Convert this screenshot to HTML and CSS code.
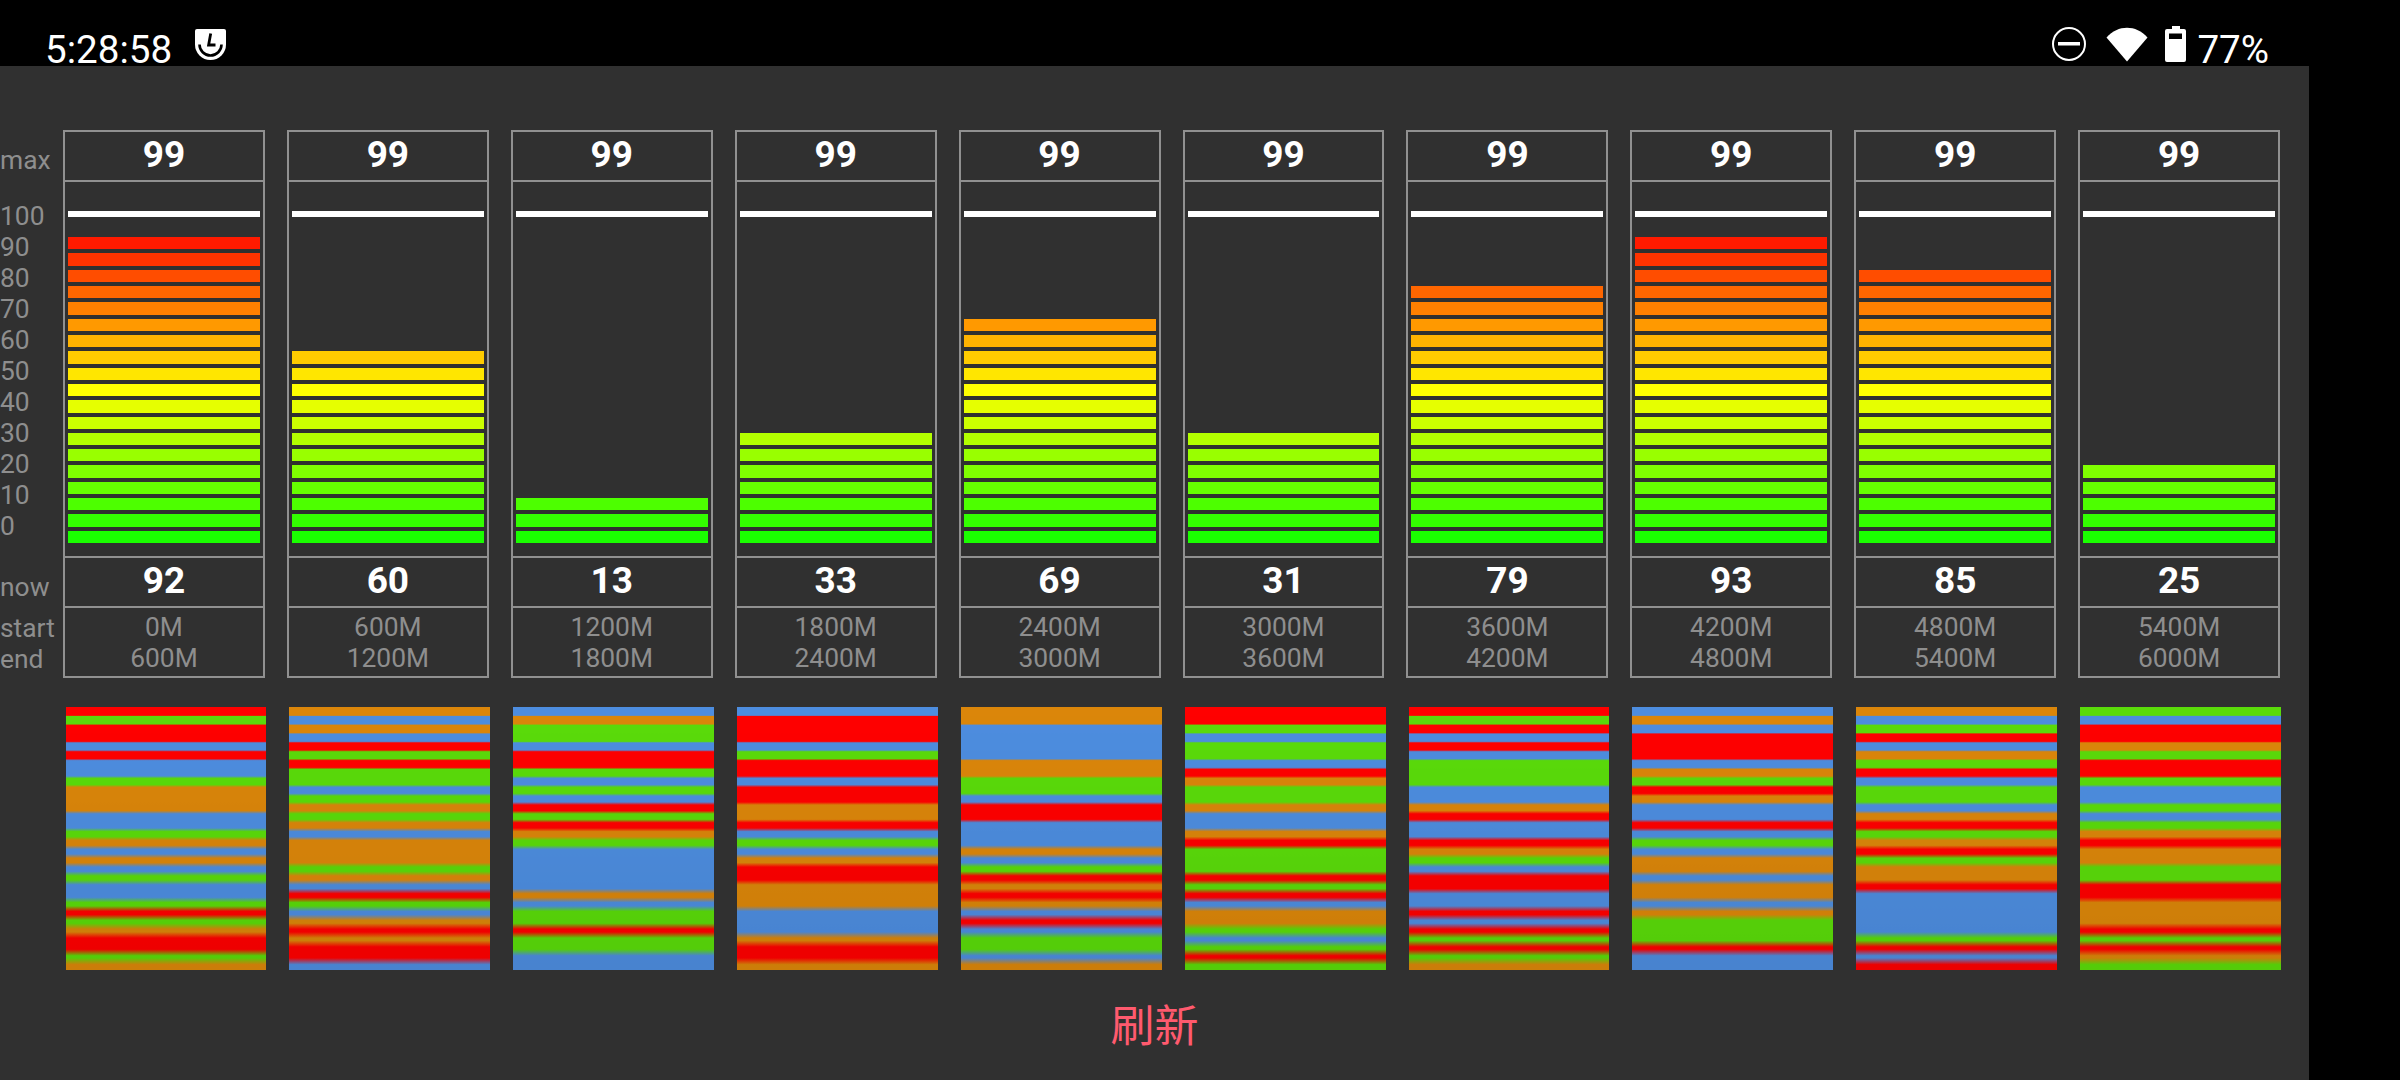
FILE: index.html
```html
<!DOCTYPE html>
<html lang="en">
<head>
  <meta charset="UTF-8">
  <meta name="viewport" content="width=device-width, initial-scale=1.0">
  <title>Flash Speed Test</title>
  <link rel="stylesheet" href="styles.css">
</head>
<body>
  <div class="screen">
    <div class="status">
      <div class="status-left">
        <span class="status-text">5:28:58</span>
        <svg class="icon-shield" width="31" height="31" viewBox="0 0 31 31">
          <path d="M2 0H29a2 2 0 0 1 2 2V15.500a15.500 15.500 0 0 1-31 0V2a2 2 0 0 1 2-2z" fill="#fff"/>
          <path d="M4.500 15.500a11 11 0 0 0 22 0" fill="none" stroke="#000" stroke-width="2.600"/>
          <path d="M15.700 4.500L13.600 16H20.500" fill="none" stroke="#000" stroke-width="2.800"/>
        </svg>
      </div>
      <div class="status-right">
        <svg class="icon-dnd" width="36" height="36" viewBox="0 0 36 36">
          <circle cx="18" cy="18" r="16" fill="none" stroke="#fff" stroke-width="2"/>
          <rect x="7" y="16" width="22" height="3.500" fill="#fff"/>
        </svg>
        <svg class="icon-wifi" width="42" height="35" viewBox="0 0 42 35">
          <path d="M0.500 10.500C12 -2.500 30 -2.500 41.500 10.500L21 34.500z" fill="#fff"/>
        </svg>
        <svg class="icon-battery" width="21" height="36" viewBox="0 0 21 36">
          <path fill-rule="evenodd" d="M7 0H15V3H19a2 2 0 0 1 2 2V34a2 2 0 0 1-2 2H2a2 2 0 0 1-2-2V5a2 2 0 0 1 2-2H7zM4 7.500V13H17V7.500z" fill="#fff"/>
        </svg>
        <span class="status-text">77%</span>
      </div>
    </div>

    <div class="panel">
      <div class="table-row">
        <div class="labels">
          <div class="label-max">max</div>
          <div class="label-scale">
            <div>100</div><div>90</div><div>80</div><div>70</div><div>60</div><div>50</div>
            <div>40</div><div>30</div><div>20</div><div>10</div><div>0</div>
          </div>
          <div class="label-now">now</div>
          <div class="label-range">start<br>end</div>
        </div>
        <div class="columns" id="columns"></div>
      </div>

      <div class="maps" id="maps"></div>

      <div class="refresh">刷新</div>
    </div>
  </div>

  <script src="script.js"></script>
</body>
</html>
```

FILE: styles.css
```css
body {
  margin: 0;
  background: #000;
  font-family: Roboto, "Noto Sans CJK SC", sans-serif;
  overflow: hidden;
}
.screen {
  width: 2309px;
  height: 1080px;
  display: flex;
  flex-direction: column;
}
.status {
  height: 66px;
  flex: none;
  padding: 0 40px 0 45px;
  display: flex;
  justify-content: space-between;
}
.status-left, .status-right {
  display: flex;
  align-items: flex-start;
}
.status-text {
  color: #fff;
  font-size: 38.600px;
  line-height: 33px;
  margin-top: 33px;
}
.icon-shield {
  margin: 29px 0 0 23px;
}
.icon-dnd {
  margin: 26px 19px 0 0;
}
.icon-wifi {
  margin: 27px 17px 0 0;
}
.icon-battery {
  margin: 26px 11px 0 0;
}
.panel {
  flex: 1;
  background: #303030;
  padding-top: 64px;
  display: flex;
  flex-direction: column;
}
.table-row {
  display: flex;
  padding-right: 29px;
  color: #8e8e8e;
  font-size: 26.400px;
  line-height: 31px;
}
.labels {
  width: 63px;
  flex: none;
  padding-top: 15px;
}
.label-max {
  margin-bottom: 25px;
}
.label-now {
  margin-top: 30px;
}
.label-range {
  margin-top: 10px;
}
.columns {
  flex: 1;
  display: flex;
  gap: 22px;
}
.col {
  flex: 1;
  border: 2px solid #909090;
  text-align: center;
}
.cell {
  height: 48px;
  color: #fff;
  font-size: 37px;
  font-weight: bold;
  line-height: 45px;
}
.chart {
  height: 378px;
  box-sizing: border-box;
  border-top: 2px solid #909090;
  border-bottom: 2px solid #909090;
  padding: 29px 3px 13px;
  display: flex;
  flex-direction: column;
}
.chart-max {
  height: 6px;
  background: #fff;
  margin-bottom: auto;
}
.seg {
  height: 12.320px;
  margin-top: 4px;
}
.range {
  height: 70px;
  box-sizing: border-box;
  border-top: 2px solid #909090;
  padding-top: 4px;
}
.maps {
  margin-top: 29px;
  padding: 0 28px 0 65.500px;
  display: flex;
  gap: 23px;
}
.map {
  flex: 1;
  height: 263px;
}
.refresh {
  flex: 1;
  display: flex;
  align-items: center;
  justify-content: center;
  padding-bottom: 5px;
  color: #ff5a6e;
  font-size: 44px;
}
```

FILE: script.js
```js
const now = [92, 60, 13, 33, 69, 31, 79, 93, 85, 25];

// top to bottom, R red, G green, B blue, O orange
const stripes = [
  "RGRRBRBBGOOOBBGOBOBGBBGRGORRGO",
  "OBOBRGRGGBGOGOBOOOGOBRGBORORRB",
  "BOGGBRRGBGBRGROGBBBBBOBGGRGGBB",
  "BRRRBGRRBRROORBGBORROOOBBBORRO",
  "OOBBBBOOGGBRRBBBOBGROROBRBGGBO",
  "RRGBGGBROGGOBBORGGGRGRBOOGBGRG",
  "RGRBRBGGGBBORBBROGBRRBBRBRGRGO",
  "BOBRRRBOGROBBRBGBOOBOOBOGGGRBB",
  "OBGRBOGRBGGBORGORGOORBBBBBGRBR",
  "GBRROGRRGBBGBGOROOGGRROOORGROG"
];

const colours = {
  R: [255, 0, 0],
  G: [90, 219, 10],
  B: [77, 141, 223],
  O: [219, 134, 10]
};

const segColours = [
  "#1aff00", "#33ff00", "#4dff00", "#66ff00", "#80ff00", "#99ff00", "#b3ff00",
  "#ccff00", "#e6ff00", "#ffff00", "#ffe600", "#ffcc00", "#ffb300", "#ff9900",
  "#ff8000", "#ff6600", "#ff4d00", "#ff3300", "#ff1a00"
];

const columns = document.getElementById("columns");
const maps = document.getElementById("maps");

now.forEach(function(value, i) {
  const count = Math.ceil(value / 5);
  let segs = "";
  for (let s = count - 1; s >= 0; s--) {
    segs += `<div class="seg" style="background: ${segColours[s]}"></div>`;
  }
  columns.innerHTML += `
    <div class="col">
      <div class="cell">99</div>
      <div class="chart"><div class="chart-max"></div>${segs}</div>
      <div class="cell">${value}</div>
      <div class="range">${i * 600}M<br>${(i + 1) * 600}M</div>
    </div>`;
});

// stripes get softer and a little darker towards the bottom
const rowHeight = 263 / 30;
stripes.forEach(function(rows) {
  const stops = [];
  for (let r = 0; r < 30; r++) {
    const blur = 0.4 + 3 * r / 29;
    const dim = 1 - 0.07 * r / 29;
    const c = colours[rows[r]].map(function(v) { return Math.round(v * dim); });
    const colour = `rgb(${c[0]},${c[1]},${c[2]})`;
    stops.push(`${colour} ${(r * rowHeight + blur).toFixed(2)}px`);
    stops.push(`${colour} ${((r + 1) * rowHeight - blur).toFixed(2)}px`);
  }
  maps.innerHTML += `<div class="map" style="background: linear-gradient(${stops.join(",")})"></div>`;
});
```
